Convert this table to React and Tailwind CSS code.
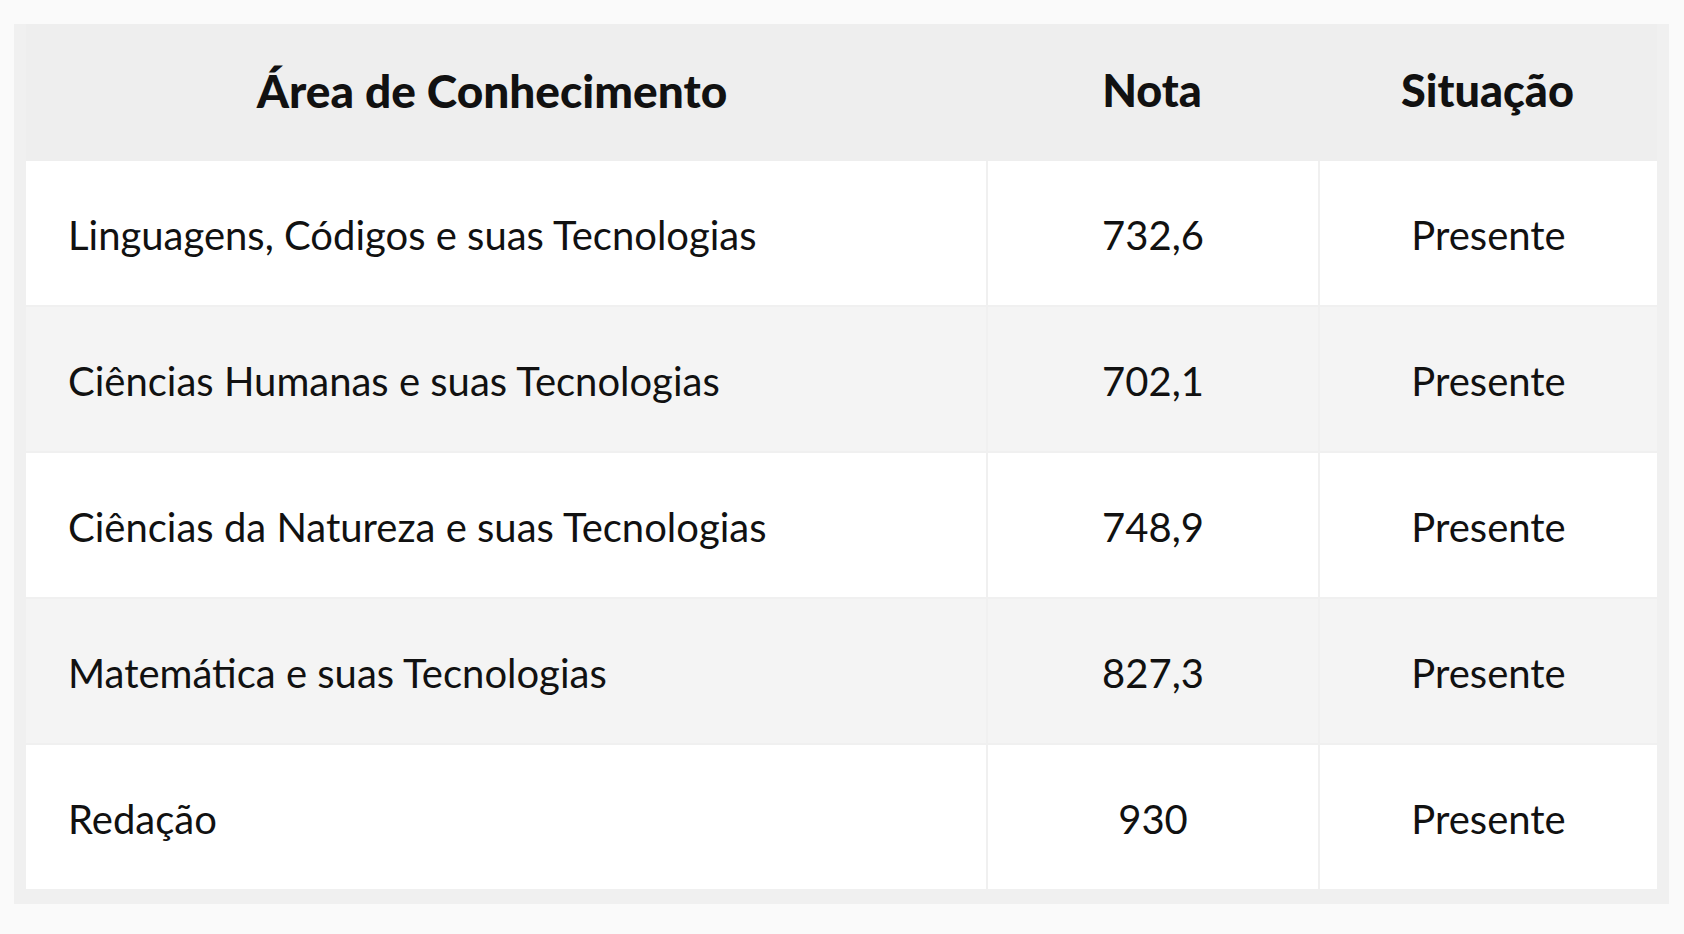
const rows = [
  { area: "Linguagens, Códigos e suas Tecnologias", nota: "732,6", situacao: "Presente" },
  { area: "Ciências Humanas e suas Tecnologias", nota: "702,1", situacao: "Presente" },
  { area: "Ciências da Natureza e suas Tecnologias", nota: "748,9", situacao: "Presente" },
  { area: "Matemática e suas Tecnologias", nota: "827,3", situacao: "Presente" },
  { area: "Redação", nota: "930", situacao: "Presente" },
];

export default function App() {
  return (
    <div
      className="min-h-screen bg-[#fafafa] pt-6 px-[14px] text-[#111111]"
      style={{ fontFamily: "Lato, 'Open Sans', sans-serif" }}
    >
      <div className="w-[1655px] bg-[#f0f0f0] px-3 pb-[15px]">
        {/* HEADER */}
        <div className="grid grid-cols-[960px_332px_339px] h-[137px] bg-[#eeeeee] items-center pb-1">
          <div className="text-center text-[46px] font-black pr-7">Área de Conhecimento</div>
          <div className="text-center text-[45px] font-black">Nota</div>
          <div className="text-center text-[45px] font-black">Situação</div>
        </div>

        {/* ROWS */}
        <div className="flex flex-col gap-[2px]">
          {rows.map((row, i) => (
            <div key={row.area} className="grid grid-cols-[960px_330px_337px] gap-[2px] h-[144px]">
              <div
                className={`flex items-center pl-[42px] pt-1 text-[40px] ${
                  i % 2 === 0 ? "bg-white" : "bg-[#f4f4f4]"
                }`}
              >
                {row.area}
              </div>
              <div
                className={`flex items-center justify-center pt-1 text-[40px] ${
                  i % 2 === 0 ? "bg-white" : "bg-[#f4f4f4]"
                }`}
              >
                {row.nota}
              </div>
              <div
                className={`flex items-center justify-center pt-1 text-[40px] ${
                  i % 2 === 0 ? "bg-white" : "bg-[#f4f4f4]"
                }`}
              >
                {row.situacao}
              </div>
            </div>
          ))}
        </div>
      </div>
    </div>
  );
}
